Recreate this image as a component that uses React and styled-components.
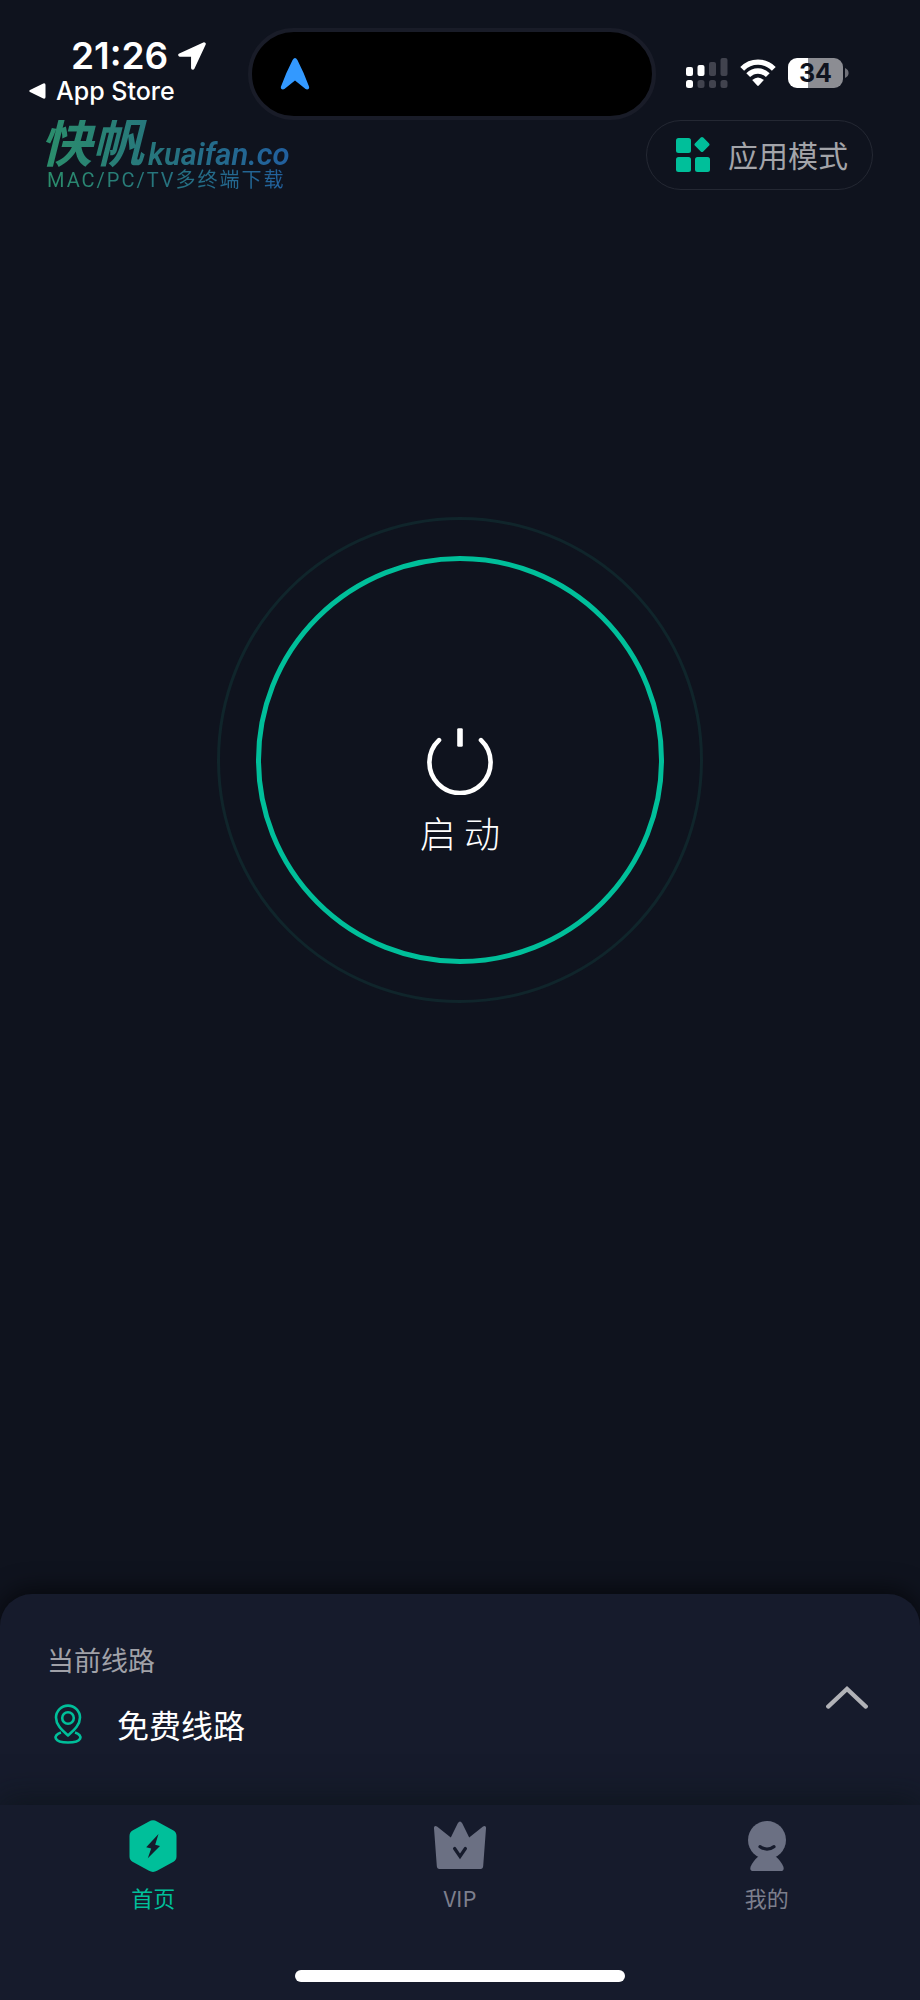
import React, { useState } from 'react';
import styled, { createGlobalStyle } from 'styled-components';

const GlobalStyle = createGlobalStyle`
  * {
    box-sizing: border-box;
  }

  body {
    margin: 0;
    background: #0f131e;
    font-family: "Noto Sans CJK SC", sans-serif;
  }

  a {
    color: inherit;
    text-decoration: none;
  }

  button {
    padding: 0;
    border: none;
    background: none;
    font: inherit;
    cursor: pointer;
  }

  svg {
    display: block;
  }
`;

const Page = styled.div`
  display: flex;
  flex-direction: column;
  min-height: 100vh;
  background: #0f131e;
  color: #fff;
`;

const StatusBar = styled.div`
  display: grid;
  grid-template-columns: 248fr 408fr 264fr;
  height: 120px;
  padding-top: 28px;
  font-family: Inter, sans-serif;
`;

const StatusLeft = styled.div`
  display: flex;
  flex-direction: column;
  padding: 8px 0 0 29px;
`;

const Clock = styled.div`
  display: flex;
  align-items: center;
  gap: 10px;
  padding-left: 42px;
  font-size: 37px;
  font-weight: 600;
  line-height: 40px;
`;

const BackLink = styled.a`
  display: flex;
  align-items: center;
  gap: 10px;
  font-size: 25px;
  font-weight: 500;
  line-height: 30px;
`;

const Island = styled.div`
  display: flex;
  align-items: center;
  height: 92px;
  padding-left: 28px;
  border: 4px solid #191c28;
  border-radius: 46px;
  background: #000;
`;

const StatusRight = styled.div`
  display: flex;
  align-items: flex-start;
  gap: 12px;
  padding: 30px 0 0 30px;
`;

const Battery = styled.div`
  display: flex;
  align-items: center;
  gap: 2px;
`;

const BatteryLevel = styled.div`
  width: 55px;
  height: 30px;
  border-radius: 9px;
  background: linear-gradient(90deg, #fff 20px, #8c8d93 20px);
  color: #0f131e;
  font-size: 25px;
  font-weight: 700;
  line-height: 30px;
  text-align: center;
`;

const Header = styled.header`
  display: flex;
  align-items: flex-start;
  justify-content: space-between;
  padding: 0 47px 0 40px;
`;

const Logo = styled.div`
  display: flex;
  flex-direction: column;
  background: linear-gradient(90deg, #2b8f6b, #26727f 50%, #215ea0);
  background-clip: text;
  color: transparent;
`;

const LogoName = styled.div`
  display: flex;
  align-items: flex-start;
  gap: 4px;
  height: 50px;
  font-size: 52px;
  font-style: italic;
  font-weight: 700;
  line-height: 40px;
`;

const LogoDomain = styled.span`
  align-self: flex-end;
  padding-right: 6px;
  font-family: Roboto, sans-serif;
  font-size: 31px;
  font-weight: 600;
  line-height: 30px;
`;

const LogoNote = styled.div`
  padding-left: 7px;
  font-family: Roboto, "Noto Sans CJK SC", sans-serif;
  font-size: 20px;
  letter-spacing: 2px;
  line-height: 20px;
`;

const ModeButton = styled.button`
  display: flex;
  align-items: center;
  gap: 18px;
  height: 70px;
  padding: 0 24px 3px 29px;
  border: 1px solid #242833;
  border-radius: 35px;
  color: #a3a4a9;
  font-size: 30px;
  line-height: 40px;
`;

const Main = styled.main`
  display: flex;
  flex: 1;
  justify-content: center;
  align-items: flex-start;
  padding: 327px 0 60px;
`;

const Halo = styled.div`
  padding: 36px;
  border: 3px solid #10252b;
  border-radius: 50%;
`;

const PowerButton = styled.button`
  display: flex;
  flex-direction: column;
  align-items: center;
  justify-content: flex-start;
  gap: 10px;
  width: 408px;
  height: 408px;
  padding-top: 166px;
  border: 5px solid #00bf9a;
  border-radius: 50%;
  color: #fff;
  font-size: 36px;
  font-weight: 300;
  line-height: 54px;
`;

const Sheet = styled.section`
  display: flex;
  align-items: flex-start;
  justify-content: space-between;
  height: 211px;
  padding: 47px 52px 0 47px;
  border-radius: 32px 32px 0 0;
  background: #161b2c;
  box-shadow: 0 -4px 24px rgba(0, 0, 0, 0.6);
`;

const SheetTitle = styled.h2`
  margin: 0;
  color: #a0a1a8;
  font-size: 27px;
  font-weight: 400;
  line-height: 38px;
`;

const Route = styled.div`
  display: flex;
  align-items: center;
  gap: 34px;
  margin-top: 22px;
  padding-left: 6px;
  font-size: 32px;
  line-height: 46px;
`;

const ExpandButton = styled.button`
  margin-top: 45px;
`;

const TabBar = styled.nav`
  height: 195px;
  background: #161b2c;
  box-shadow: 0 -6px 30px rgba(10, 18, 20, 0.6);
`;

const Tabs = styled.div`
  display: grid;
  grid-template-columns: repeat(3, 1fr);
  height: 165px;
`;

const Tab = styled.a`
  display: flex;
  flex-direction: column;
  align-items: center;
  gap: 8px;
  padding-top: 14px;
  color: ${(props) => (props.$active ? '#00bf9a' : '#7d7f8d')};
  font-size: 22px;
  line-height: 32px;
`;

const HomeIndicator = styled.div`
  width: 330px;
  height: 12px;
  margin: 0 auto;
  border-radius: 6px;
  background: #fff;
`;

const LocationArrow = () => (
  <svg width="28" height="28" viewBox="0 0 28 28" fill="#fff" stroke="#fff" strokeWidth="3.500" strokeLinejoin="round">
    <path d="M26 2 2 13H13.500Q14.800 13 14.800 14.300V26Z" />
  </svg>
);

const BackTriangle = () => (
  <svg width="17" height="16" viewBox="0 0 17 16" fill="#fff">
    <path d="M1 6.900 14.300.4Q16.500-.3 16.500 2v12q0 2.300-2.200 1.600L1 9.100Q-.5 8 1 6.900Z" />
  </svg>
);

const NavigationArrow = () => (
  <svg width="30" height="32" viewBox="0 0 30 32" fill="#3399ff">
    <path d="M12.600 1.900Q15-1.700 17.400 1.900 24 14.500 29 28.600C29.800 31 27.400 32.200 25.600 31L15 22.600 4.400 31C2.600 32.200.2 31 1 28.600Q6 14.500 12.600 1.900Z" />
  </svg>
);

const SIGNAL_BARS = [
  { x: 0, top: 9, bar: '#fff', dot: '#fff' },
  { x: 11.5, top: 7, bar: '#fff', dot: '#41434e' },
  { x: 23, top: 4, bar: '#41434e', dot: '#41434e' },
  { x: 34.5, top: 0, bar: '#41434e', dot: '#41434e' },
];

const Signal = () => (
  <svg width="42" height="30" viewBox="0 0 42 30">
    {SIGNAL_BARS.map(({ x, top, bar, dot }) => (
      <g key={x}>
        <rect x={x} y={top} width="7" height={18 - top} rx="2" fill={bar} />
        <rect x={x} y="22" width="7" height="8" rx="2.500" fill={dot} />
      </g>
    ))}
  </svg>
);

const Wifi = () => (
  <svg width="36" height="30" viewBox="0 0 36 30" fill="none" stroke="#fff">
    <path d="M2.200 10.800C11 1.900 25 1.900 33.800 10.800" strokeWidth="5.400" />
    <path d="M8.200 17.100C13.800 11.600 22.200 11.600 27.800 17.100" strokeWidth="5.400" />
    <path d="M12.200 22Q18 16.800 23.800 22L18.800 27.600Q18 28.400 17.200 27.600Z" fill="#fff" stroke="none" />
  </svg>
);

const BatteryCap = () => (
  <svg width="4" height="10" viewBox="0 0 4 10" fill="#6f7078">
    <path d="M0 0Q3.600 1.700 3.600 5T0 10Z" />
  </svg>
);

const ModeIcon = () => (
  <svg width="34" height="36" viewBox="0 0 34 36" fill="#00bf9a">
    <rect x="0" y="2" width="15" height="15" rx="2.500" />
    <rect x="0" y="21" width="15" height="15" rx="2.500" />
    <rect x="19" y="21" width="15" height="15" rx="2.500" />
    <rect x="20.200" y="2.700" width="11.600" height="11.600" rx="1.800" transform="rotate(45 26 8.500)" />
  </svg>
);

const PowerIcon = () => (
  <svg width="66" height="68" viewBox="0 0 66 68" fill="none" stroke="#fff" strokeLinecap="round">
    <path d="M12 13.200A30.600 30.600 0 1 0 54 13.200" strokeWidth="4.600" />
    <rect x="30.200" y="1.200" width="5.600" height="18.600" rx="1.400" fill="#fff" stroke="none" />
  </svg>
);

const PinIcon = () => (
  <svg width="30" height="40" viewBox="0 0 30 40" fill="none" stroke="#00bf9a" strokeWidth="2.600" strokeLinejoin="round">
    <path d="M15 31.500C9 26 3 21 3 13.600a12 12 0 0 1 24 0C27 21 21 26 15 31.500Z" />
    <circle cx="15" cy="14" r="5.800" />
    <path d="M8 28.500C-1 31.500 1 38.500 15 38.500S31 31.500 22 28.500" />
  </svg>
);

const ChevronUp = () => (
  <svg width="42" height="23" viewBox="0 0 42 23" fill="none" stroke="#b1b2b7" strokeWidth="4.200">
    <path d="M2.200 20.600 21 3 39.800 20.600" strokeLinecap="round" />
  </svg>
);

const HomeIcon = () => (
  <svg width="52" height="54" viewBox="0 0 52 54">
    <path
      d="M22 2.400Q26 0 30 2.400L46.500 11.600Q49.500 13.400 49.500 17V37.500Q49.500 41 46.500 42.800L30 51.800Q26 54 22 51.800L5.500 42.800Q2.500 41 2.500 37.500V17Q2.500 13.400 5.500 11.600Z"
      fill="#00bf9a"
    />
    <path d="M31.500 15 19.200 28.200 24.200 29.600 20.800 39.300 33 27 28.200 25.800Z" fill="#161b2c" />
  </svg>
);

const CrownIcon = () => (
  <svg width="52" height="54" viewBox="0 0 52 54">
    <path
      d="M3 7.400 16.800 18.600 23.800 4.200Q26 1 28.200 4.200L35.200 18.600 49 7.400Q52.200 6 52 9.200L49.200 47Q49 50 46.500 50H5.500Q3 50 2.800 47L0 9.200Q-.2 6 3 7.400Z"
      fill="#6b7083"
    />
    <path d="M20.600 29.500 26 37.500 31.400 29.500" fill="none" stroke="#161b2c" strokeWidth="3.200" strokeLinecap="round" />
  </svg>
);

const MineIcon = () => (
  <svg width="52" height="54" viewBox="0 0 52 54">
    <circle cx="26" cy="21" r="19" fill="#6b7083" />
    <path d="M17.800 37H34.200Q40 42 42.300 47.500C43.400 50.500 42 52 39.800 52H12.200C10 52 8.600 50.500 9.700 47.500Q12 42 17.800 37Z" fill="#6b7083" />
    <path d="M19 27.600Q26 32.600 33 27.600" fill="none" stroke="#161b2c" strokeWidth="3.200" strokeLinecap="round" />
  </svg>
);

const TABS = [
  { id: 'home', label: '首页', Icon: HomeIcon },
  { id: 'vip', label: 'VIP', Icon: CrownIcon },
  { id: 'mine', label: '我的', Icon: MineIcon },
];

function App() {
  const [activeTab, setActiveTab] = useState('home');

  return (
    <>
      <GlobalStyle />
      <Page>
        <StatusBar>
          <StatusLeft>
            <Clock>
              21:26
              <LocationArrow />
            </Clock>
            <BackLink href="#store">
              <BackTriangle />
              App Store
            </BackLink>
          </StatusLeft>
          <Island>
            <NavigationArrow />
          </Island>
          <StatusRight>
            <Signal />
            <Wifi />
            <Battery>
              <BatteryLevel>34</BatteryLevel>
              <BatteryCap />
            </Battery>
          </StatusRight>
        </StatusBar>

        <Header>
          <Logo>
            <LogoName>
              快帆
              <LogoDomain>kuaifan.co</LogoDomain>
            </LogoName>
            <LogoNote>MAC/PC/TV多终端下载</LogoNote>
          </Logo>
          <ModeButton type="button">
            <ModeIcon />
            应用模式
          </ModeButton>
        </Header>

        <Main>
          <Halo>
            <PowerButton type="button">
              <PowerIcon />
              启 动
            </PowerButton>
          </Halo>
        </Main>

        <Sheet>
          <div>
            <SheetTitle>当前线路</SheetTitle>
            <Route>
              <PinIcon />
              免费线路
            </Route>
          </div>
          <ExpandButton type="button" aria-label="展开线路">
            <ChevronUp />
          </ExpandButton>
        </Sheet>

        <TabBar>
          <Tabs>
            {TABS.map(({ id, label, Icon }) => (
              <Tab
                key={id}
                href={`#${id}`}
                $active={id === activeTab}
                onClick={() => setActiveTab(id)}
              >
                <Icon />
                {label}
              </Tab>
            ))}
          </Tabs>
          <HomeIndicator />
        </TabBar>
      </Page>
    </>
  );
}

export default App;
